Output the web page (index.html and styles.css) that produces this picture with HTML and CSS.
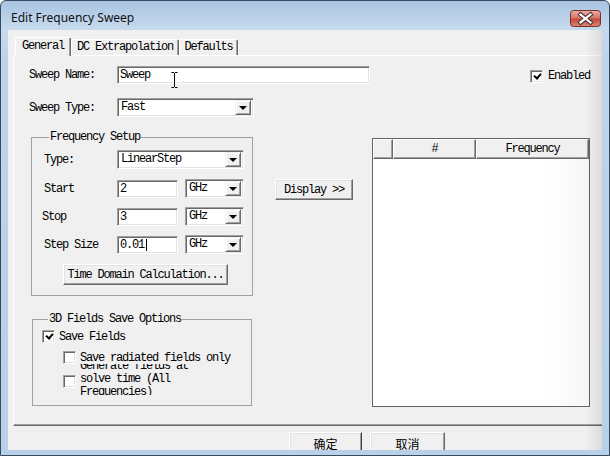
FILE: index.html
```html
<!DOCTYPE html>
<html>
<head>
<meta charset="utf-8">
<link rel="stylesheet" href="styles.css">
</head>
<body>
<div class="window">
  <div class="titlebar">
    <span class="title">Edit Frequency Sweep</span>
    <svg class="close" width="31" height="17" viewBox="0 0 31 17">
      <defs>
        <linearGradient id="cg" x1="0" y1="0" x2="0" y2="1">
          <stop offset="0" stop-color="#eab0a2"/>
          <stop offset="0.45" stop-color="#d6776a"/>
          <stop offset="0.55" stop-color="#c4493b"/>
          <stop offset="1" stop-color="#dc8a74"/>
        </linearGradient>
      </defs>
      <rect x="0.5" y="0.5" width="30" height="16" rx="3" fill="url(#cg)" stroke="#7a2f25"/>
      <path d="M10.5 4.5 L20.5 12.5 M20.5 4.5 L10.5 12.5" stroke="#4a3434" stroke-width="4.2" stroke-linecap="square"/>
      <path d="M10.5 4.5 L20.5 12.5 M20.5 4.5 L10.5 12.5" stroke="#ffffff" stroke-width="2.2" stroke-linecap="square"/>
    </svg>
  </div>
  <div class="client">
    <div class="tabs">
      <div class="tab active w-general">General</div>
      <div class="tab w-dc">DC Extrapolation</div>
      <div class="tab w-def">Defaults</div>
    </div>
    <div class="panel">
      <div class="row row-name">
        <span class="lbl">Sweep Name:</span>
        <div class="edit w-name">Sweep<svg class="ibeam" width="7" height="16" viewBox="0 0 7 16"><path d="M0.5 0.5h2.5M4 0.5h2.5M3.5 1v14M0.5 15.5h2.5M4 15.5h2.5" stroke="#000" stroke-width="1" fill="none"/></svg></div>
        <label class="enabled"><span class="check on"></span><span>Enabled</span></label>
      </div>
      <div class="row row-type">
        <span class="lbl">Sweep Type:</span>
        <div class="combo w-type"><span class="val">Fast</span><span class="arrow"></span></div>
      </div>
      <div class="main">
        <div class="leftcol">
          <fieldset class="group g1">
            <legend>Frequency Setup</legend>
            <div class="frow first">
              <span class="flbl">Type:</span>
              <div class="combo w-ftype"><span class="val">LinearStep</span><span class="arrow"></span></div>
            </div>
            <div class="frow second">
              <span class="flbl">Start</span>
              <div class="edit w-num">2</div>
              <div class="combo w-unit"><span class="val">GHz</span><span class="arrow"></span></div>
            </div>
            <div class="frow">
              <span class="flbl shift">Stop</span>
              <div class="edit w-num">3</div>
              <div class="combo w-unit"><span class="val">GHz</span><span class="arrow"></span></div>
            </div>
            <div class="frow">
              <span class="flbl">Step Size</span>
              <div class="edit w-num">0.01<span class="caret"></span></div>
              <div class="combo w-unit"><span class="val">GHz</span><span class="arrow"></span></div>
            </div>
            <div class="btn tdc">Time Domain Calculation...</div>
          </fieldset>
          <fieldset class="group g2">
            <legend>3D Fields Save Options</legend>
            <div class="crow">
              <span class="check on"></span><span>Save Fields</span>
            </div>
            <div class="crow sub">
              <span class="check"></span><span>Save radiated fields only</span>
            </div>
            <div class="crow sub multi">
              <span class="check"></span>
              <div class="mtext"><span>Generate fields at solve time (All Frequencies)</span></div>
            </div>
          </fieldset>
        </div>
        <div class="btn display">Display &gt;&gt;</div>
        <div class="list">
          <div class="lhead">
            <div class="hc c1"></div>
            <div class="hc c2">#</div>
            <div class="hc c3">Frequency</div>
          </div>
        </div>
      </div>
    </div>
    <div class="footer">
      <div class="btn fbtn ok">确定</div>
      <div class="btn fbtn cancel">取消</div>
    </div>
    <div class="shade"></div>
  </div>
</div>
</body>
</html>
```
FILE: styles.css
```css
* { box-sizing: border-box; }
html, body { margin: 0; padding: 0; }
body {
  width: 610px; height: 459px; overflow: hidden; background: #fff;
  font-family: "Liberation Mono", "DejaVu Sans Mono", monospace;
  font-size: 12px; letter-spacing: -1.2px; color: #000;
}
.window {
  width: 610px; height: 456px;
  border: 1px solid #3a4a5e; border-radius: 6px 6px 0 0;
  background: linear-gradient(#a9c4e1 0, #c6daee 28px, #bcd3ea 60px, #b9d0e9 100%);
  padding: 0 7px 5px 7px;
  display: flex; flex-direction: column;
}
.titlebar {
  height: 29px; flex: none;
  display: flex; align-items: flex-start; justify-content: space-between;
  padding-left: 3px;
}
.title {
  font-family: "Noto Sans", sans-serif; font-size: 12px; letter-spacing: 0;
  line-height: 16px; margin-top: 9px; color: #111;
}
.close { margin-top: 9px; margin-right: 1px; }
.client {
  position: relative; flex: 1;
  background: #f0f0f0; overflow: hidden;
  display: flex; flex-direction: column;
  padding: 7px 0 0 5px;
}
.tabs { display: flex; align-items: flex-end; height: 18px; margin-left: 2px; position: relative; z-index: 1; }
.tab {
  height: 16px; line-height: 15px; text-align: center;
  border: 1px solid; border-bottom: none;
  border-color: #fff #696969 transparent #fff;
  box-shadow: inset -1px 0 #a0a0a0;
  border-radius: 2px 2px 0 0;
  background: #f0f0f0;
}
.tab.active { height: 19px; margin-bottom: -1px; line-height: 16px; }
.w-general { width: 56px; }
.w-dc { width: 108px; }
.w-def { width: 59px; }
.panel {
  height: 371px; flex: none;
  border: 1px solid; border-color: #fff #696969 #696969 #fff;
  box-shadow: inset -1px -1px #a0a0a0;
  margin-right: -4px;
  padding: 10px 0 0 15px;
}
.row { display: flex; align-items: center; }
.row-name { height: 18px; }
.row-type { height: 19px; margin-top: 14px; }
.lbl { width: 88px; flex: none; }
.edit {
  position: relative; background: #fff; height: 18px;
  border: 1px solid; border-color: #a0a0a0 #fff #fff #a0a0a0;
  box-shadow: inset 1px 1px #696969, inset -1px -1px #e3e3e3;
  padding: 0 0 0 2px; line-height: 16px;
  display: flex; align-items: center;
}
.w-name { width: 253px; }
.ibeam { position: absolute; left: 53px; top: 5px; }
.caret { display: inline-block; width: 1px; height: 12px; background: #000; margin-left: 2px; }
.combo {
  background: #fff; height: 19px;
  border: 1px solid; border-color: #a0a0a0 #fff #fff #a0a0a0;
  box-shadow: inset 1px 1px #696969, inset -1px -1px #e3e3e3;
  display: flex; align-items: center; justify-content: space-between;
  padding: 2px 2px 2px 3px;
}
.combo .val { line-height: 15px; }
.arrow {
  width: 16px; height: 15px; flex: none; background: #f0f0f0;
  border: 1px solid; border-color: #f0f0f0 #696969 #696969 #f0f0f0;
  box-shadow: inset 1px 1px #fff, inset -1px -1px #a0a0a0;
  display: flex; align-items: center; justify-content: center;
}
.arrow::after {
  content: ""; width: 0; height: 0;
  border-left: 4px solid transparent; border-right: 4px solid transparent;
  border-top: 4px solid #000; margin-top: 1px;
}
.w-type { width: 137px; }
.enabled { display: flex; align-items: center; margin-left: 160px; gap: 5px; margin-top: 2px; }
.check {
  width: 13px; height: 13px; flex: none; background: #fff;
  border: 1px solid; border-color: #a0a0a0 #fff #fff #a0a0a0;
  box-shadow: inset 1px 1px #696969, inset -1px -1px #e3e3e3;
  position: relative;
}
.check.on::after {
  content: ""; position: absolute; left: 3px; top: 2px;
  width: 5px; height: 3px;
  border-left: 2px solid #000; border-bottom: 2px solid #000;
  transform: rotate(-50deg); transform-origin: center;
}
.main { display: flex; align-items: flex-start; margin-top: 13px; margin-left: 2px; }
.leftcol { width: 222px; flex: none; display: flex; flex-direction: column; }
.group {
  margin: 0; border: 1px solid #a0a0a0; min-width: 0;
}
.group legend { padding: 0 1px; line-height: 14px; }
.g1 { width: 222px; padding: 6px 0 10px 12px; }
.g1 legend { margin-left: 5px; }
.g2 { width: 220px; margin-left: 1px; margin-top: 16px; padding: 4px 0 10px 9px; }
.g2 legend { margin-left: 6px; }
.frow { display: flex; align-items: center; margin-top: 9px; }
.frow.first { margin-top: 0; }
.frow.second { margin-top: 10px; }
.flbl { width: 73px; flex: none; }
.flbl.shift { margin-left: -2px; width: 75px; }
.w-ftype { width: 127px; }
.w-num { width: 61px; }
.w-unit { width: 59px; height: 19px; margin-left: 7px; }
.btn {
  background: #f0f0f0; height: 21px; text-align: center;
  border: 1px solid; border-color: #fff #696969 #696969 #fff;
  box-shadow: inset -1px -1px #a0a0a0, inset 1px 1px #e3e3e3;
  display: flex; align-items: center; justify-content: center;
}
.tdc { width: 165px; margin: 10px 0 0 19px; }
.crow { display: flex; align-items: center; gap: 4px; height: 13px; }
.crow.sub { margin-left: 21px; margin-top: 8px; }
.crow.multi { margin-top: 0; height: 31px; align-items: center; }
.crow.multi .check { margin-top: 3px; }
.mtext {
  width: 114px; height: 31px; overflow: hidden;
  display: flex; flex-direction: column; justify-content: center;
  line-height: 13px;
}
.display { width: 78px; margin: 49px 0 0 22px; flex: none; }
.list {
  width: 218px; height: 269px; flex: none; margin: 8px 0 0 19px;
  background: linear-gradient(90deg, #fff 80%, #f6f6f6 100%);
  border: 1px solid #646464;
  box-shadow: inset 0 1px #a0a0a0;
}
.lhead { display: flex; height: 20px; }
.hc {
  height: 20px; background: #f0f0f0;
  border: 1px solid; border-color: #fff #696969 #696969 #fff;
  box-shadow: inset -1px -1px #a0a0a0;
  display: flex; align-items: center; justify-content: center;
}
.c1 { width: 20px; }
.c2 { width: 83px; }
.c3 { flex: 1; }
.footer { display: flex; gap: 8px; margin: 6px 0 0 276px; }
.fbtn {
  height: 23px; font-family: "Noto Sans CJK SC", sans-serif; letter-spacing: 0;
  font-size: 12px;
}
.ok { width: 73px; border-color: #fff #404040 #404040 #fff; }
.cancel { width: 75px; }
.shade {
  position: absolute; right: 0; top: 0; bottom: 0; width: 16px;
  background: linear-gradient(90deg, rgba(0,0,0,0) 0, rgba(0,0,0,0.09) 100%);
  pointer-events: none;
}
```
